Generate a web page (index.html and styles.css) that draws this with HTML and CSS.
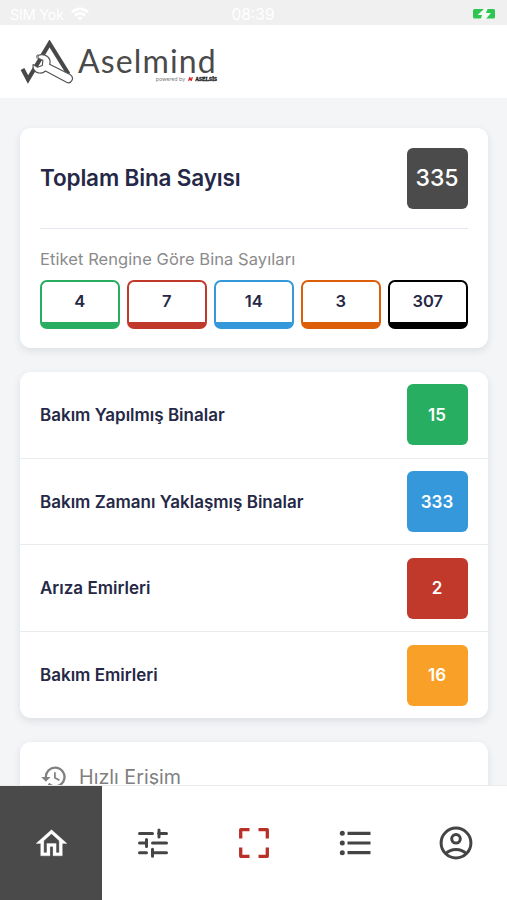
FILE: index.html
```html
<!DOCTYPE html>
<html lang="tr">
<head>
<meta charset="utf-8">
<meta name="viewport" content="width=device-width, initial-scale=1">
<title>Aselmind</title>
<link rel="stylesheet" href="styles.css">
</head>
<body>
<div class="app">
  <div class="status">
    <div class="carrier"><span class="sim">SIM Yok</span>
      <svg width="18" height="14" viewBox="0 0 18 14" fill="none" stroke="#fff" stroke-width="2.7"><path d="M1 5.200C5.500.8 12.500.8 17 5.200M4 8.500c3-2.800 7-2.800 10 0"/><path d="M9 13.500 6.200 10.800c1.700-1.500 3.900-1.500 5.600 0z" fill="#fff" stroke="none"/></svg>
    </div>
    <span class="clock">08:39</span>
    <svg class="battery" width="24" height="12" viewBox="0 0 24 12"><rect x="1" y="1" width="22" height="9.500" rx="1.500" fill="#2fc552"/><path d="M13 0 5.500 7h4.500L8.500 12h4.500L19 5h-5L16 0z" fill="#f4fbf5"/></svg>
  </div>
  <header class="header">
    <svg class="mark" width="54" height="46" viewBox="0 0 54 46">
      <path d="M2.500 29 8 39.500 29.500 3.500 48.500 34" fill="none" stroke="#484848" stroke-width="4.200"/>
      <path d="M18 15.500c4.500-2 10.500 0 11.800 4.300.5 1.700.4 3-.2 4.500L50 34.500c5 3 1.500 10-3.500 7.800L25.500 31c-3.500 3.300-9.500 2.500-11.500-1.200-1-1.800-1.200-3.500-.8-5.300l4.300 2.800 4.800-1.800.6-5.200-4.800-2z" fill="#fff" stroke="#555" stroke-width="1.200" stroke-linejoin="round"/>
      <path d="M17 18.500c-1-1.500-.5-3.500 1-4" fill="none" stroke="#777" stroke-width="1"/>
    </svg>
    <div class="brand">
      <span class="name">Aselmind</span>
      <span class="powered"><span class="by">powered by</span><svg width="5" height="4" viewBox="0 0 5 4"><path d="M.7 4 1.700.5 3.300 3.600 4.300 0" fill="none" stroke="#d3222a" stroke-width="1.200"/></svg><b class="firm">ASELSİS</b></span>
    </div>
  </header>
  <main class="content">
    <section class="card summary">
      <div class="total"><h1>Toplam Bina Sayısı</h1><span class="badge dark">335</span></div>
      <p class="caption">Etiket Rengine Göre Bina Sayıları</p>
      <div class="tags">
        <span class="tag green">4</span><span class="tag red">7</span><span class="tag blue">14</span><span class="tag orange">3</span><span class="tag black">307</span>
      </div>
    </section>
    <section class="card list">
      <div class="row"><span>Bakım Yapılmış Binalar</span><span class="badge green">15</span></div>
      <div class="row"><span>Bakım Zamanı Yaklaşmış Binalar</span><span class="badge blue">333</span></div>
      <div class="row"><span>Arıza Emirleri</span><span class="badge red">2</span></div>
      <div class="row"><span>Bakım Emirleri</span><span class="badge amber">16</span></div>
    </section>
    <section class="card quick">
      <svg width="28" height="28" viewBox="0 0 24 24" fill="#808080"><path d="M13 3a9 9 0 0 0-9 9H1l3.900 3.900.1.100L9 12H6a7 7 0 1 1 2.060 4.940l-1.420 1.420A9 9 0 1 0 13 3zm-1 5v5l4.250 2.520.77-1.280-3.520-2.090V8z"/></svg>
      <h2>Hızlı Erişim</h2>
    </section>
  </main>
  <nav class="nav">
    <a class="tab active"><svg width="37" height="37" viewBox="0 0 24 24" fill="#fff" stroke="#fff" stroke-width=".2"><path d="m12 5.690 5 4.500V18h-2v-6H9v6H7v-7.810l5-4.500M12 3 2 12h3v8h6v-6h2v6h6v-8h3z"/></svg></a>
    <a class="tab"><svg width="32" height="32" viewBox="0 0 32 32" fill="none" stroke="#444" stroke-width="3" stroke-linecap="round"><path d="M2.500 6.500h13M21.500 6.500h8M22 3v7M2.500 16h7M9.500 12.500v7M15.500 16h14M2.500 25.700h7M15.500 22.200v7M15.500 25.700h14"/></svg></a>
    <a class="tab"><svg width="32" height="32" viewBox="0 0 32 32" fill="none" stroke="#b93029" stroke-width="3.300" stroke-linejoin="round"><path d="M2.700 11.500V2.700h8.800M20.500 2.700h8.800v8.800M2.700 20.500v8.800h8.800M20.500 29.300h8.800v-8.800"/></svg></a>
    <a class="tab"><svg width="32" height="32" viewBox="0 0 32 32" fill="none" stroke="#444" stroke-width="3.200"><path d="M8.500 6.300h23M8.500 16h23M8.500 25.700h23"/><g fill="#444" stroke="none"><circle cx="3.300" cy="6.300" r="2.500"/><circle cx="3.300" cy="16" r="2.500"/><circle cx="3.300" cy="25.700" r="2.500"/></g></svg></a>
    <a class="tab"><svg width="34" height="34" viewBox="0 0 34 34" fill="none" stroke="#444" stroke-width="3"><circle cx="17" cy="17" r="14.900"/><circle cx="17" cy="12.800" r="4.300"/><path d="M7 27.500c5-5.500 15-5.500 20 0"/></svg></a>
  </nav>
</div>
</body>
</html>
```
FILE: styles.css
```css
* { box-sizing: border-box; }
body { margin: 0; font-family: Inter, "Liberation Sans", sans-serif; color: #252846; background: #f3f5f7; }
h1, h2, p { margin: 0; }
svg { display: block; flex: none; }
.app { height: 900px; display: flex; flex-direction: column; overflow: hidden; }
.status { flex: none; height: 25px; padding: 3px 11px 0 10px; background: #f0f0f0; display: grid; grid-template-columns: 1fr auto 1fr; align-items: center; color: #fff; font-size: 14.500px; }
.carrier { display: flex; align-items: center; gap: 7px; }
.sim { letter-spacing: -.3px; }
.clock { font-size: 15.500px; }
.battery { justify-self: end; }
.header { flex: none; height: 73px; background: #fff; padding: 15px 0 0 20px; display: flex; gap: 4px; }
.brand { width: 139px; display: flex; flex-direction: column; }
.name { font: 400 32px/28px Lato, sans-serif; letter-spacing: 1.150px; color: #4a4a4a; white-space: nowrap; margin-top: 7px; height: 28px; }
.powered { display: flex; align-items: center; justify-content: flex-end; gap: 2px; height: 6px; margin-top: 1px; font-size: 5.300px; line-height: 6px; color: #777; }
.powered .by { margin-right: 1px; }
.firm { font-family: "Liberation Serif", serif; color: #111; -webkit-text-stroke: .3px #111; }
.content { flex: 1; min-height: 0; overflow: hidden; padding: 30px 19.500px 0 20px; display: flex; flex-direction: column; gap: 24px; }
.card { flex: none; background: #fff; border-radius: 11px; box-shadow: 0 3px 9px rgba(30, 40, 50, .1); }
.summary { height: 220px; padding: 0 20px; }
.total { height: 101px; border-bottom: 1px solid #e4e7ef; display: flex; align-items: center; justify-content: space-between; }
h1 { font-size: 22.500px; font-weight: 600; letter-spacing: -.15px; line-height: 28px; padding-bottom: 1px; }
.badge { width: 61px; height: 61px; border-radius: 6px; color: #fff; display: flex; align-items: center; justify-content: center; font-size: 17px; font-weight: 600; }
.badge.dark { background: #4b4b4b; font-size: 23px; font-weight: 500; }
.badge.green { background: #27ae60; }
.badge.blue { background: #3498db; }
.badge.red { background: #c0392b; }
.badge.amber { background: #f9a028; }
.caption { font-size: 16.500px; line-height: 20px; padding-top: 20px; color: #8b8b8b; height: 50.500px; white-space: nowrap; letter-spacing: .07px; }
.tags { display: flex; gap: 7.500px; }
.tag { flex: 1; height: 49px; padding-bottom: 1px; border: 2.500px solid; border-bottom-width: 7px; border-radius: 7px; display: flex; align-items: center; justify-content: center; font-size: 16.500px; font-weight: 600; color: #252846; }
.tag.green { border-color: #27ae60; }
.tag.red { border-color: #c0392b; }
.tag.blue { border-color: #3498db; }
.tag.orange { border-color: #dc5e08; }
.tag.black { border-color: #000; }
.row { height: 86.700px; padding: 0 20px; display: flex; align-items: center; justify-content: space-between; font-size: 17px; font-weight: 600; border-bottom: 1px solid #e9ebed; }
.row:last-child { border: 0; height: 86px; }
.quick { height: 120px; padding: 21px 20px; display: flex; gap: 11px; }
h2 { font-size: 19.700px; line-height: 28px; font-weight: 400; color: #808080; }
.nav { flex: none; height: 115px; background: #fff; border-top: 1px solid #e9ebec; display: grid; grid-template-columns: 102px repeat(4, 1fr); }
.tab { display: flex; align-items: center; justify-content: center; }
.tab.active { background: #4a4a4a; }
```
